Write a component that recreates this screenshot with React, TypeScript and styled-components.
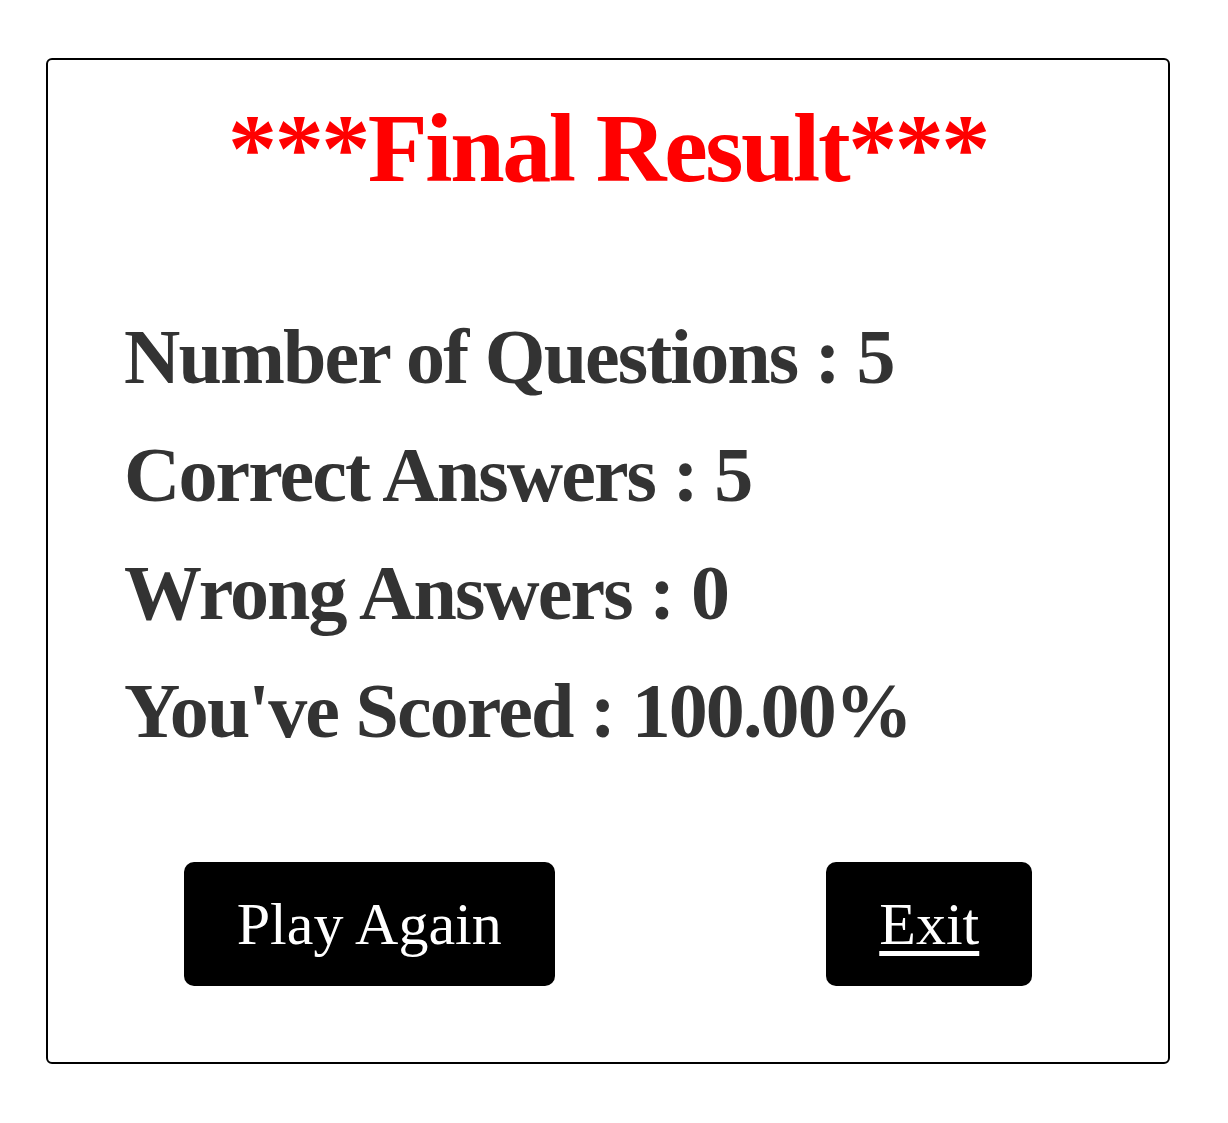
import React from "react";
import styled, { createGlobalStyle } from "styled-components";

const GlobalStyle = createGlobalStyle`
  html, body {
    margin: 0;
    padding: 0;
    background: #ffffff;
  }
  body {
    font-family: "Liberation Serif", "Times New Roman", serif;
  }
`;

const Page = styled.div`
  padding: 58px 58px 60px 46px;
`;

const Card = styled.section`
  border: 2px solid #000000;
  border-radius: 6px;
  padding: 28px 0 76px 0;
  display: flex;
  flex-direction: column;
`;

const Title = styled.h1`
  margin: 0;
  text-align: center;
  color: #ff0000;
  font-family: "Liberation Serif", "Times New Roman", serif;
  font-weight: 700;
  font-size: 98px;
  line-height: 120px;
  letter-spacing: -2.4px;
`;

const Stats = styled.div`
  margin-top: 90px;
  padding-left: 76px;
  display: flex;
  flex-direction: column;
`;

const StatLine = styled.p`
  margin: 0;
  color: #333333;
  font-family: "Liberation Serif", "Times New Roman", serif;
  font-weight: 700;
  font-size: 78px;
  line-height: 118px;
  letter-spacing: -1.9px;
  white-space: nowrap;
`;

const Actions = styled.div`
  margin-top: 92px;
  display: flex;
  justify-content: space-around;
  align-items: center;
`;

const ActionButton = styled.button<{ $underline?: boolean }>`
  height: 124px;
  padding: 0 53px;
  border: none;
  border-radius: 10px;
  background: #000000;
  color: #ffffff;
  font-family: "Liberation Serif", "Times New Roman", serif;
  font-weight: 400;
  font-size: 60px;
  display: flex;
  align-items: center;
  justify-content: center;
  cursor: pointer;
  text-decoration: ${(p) => (p.$underline ? "underline" : "none")};
  text-decoration-thickness: 5px;
  text-underline-offset: 7px;
`;

const stats = [
  "Number of Questions : 5",
  "Correct Answers : 5",
  "Wrong Answers : 0",
  "You've Scored : 100.00%",
];

export default function App() {
  return (
    <>
      <GlobalStyle />
      <Page>
        <Card>
          <Title>***Final Result***</Title>
          <Stats>
            {stats.map((s) => (
              <StatLine key={s}>{s}</StatLine>
            ))}
          </Stats>
          <Actions>
            <ActionButton>Play Again</ActionButton>
            <ActionButton $underline>Exit</ActionButton>
          </Actions>
        </Card>
      </Page>
    </>
  );
}
